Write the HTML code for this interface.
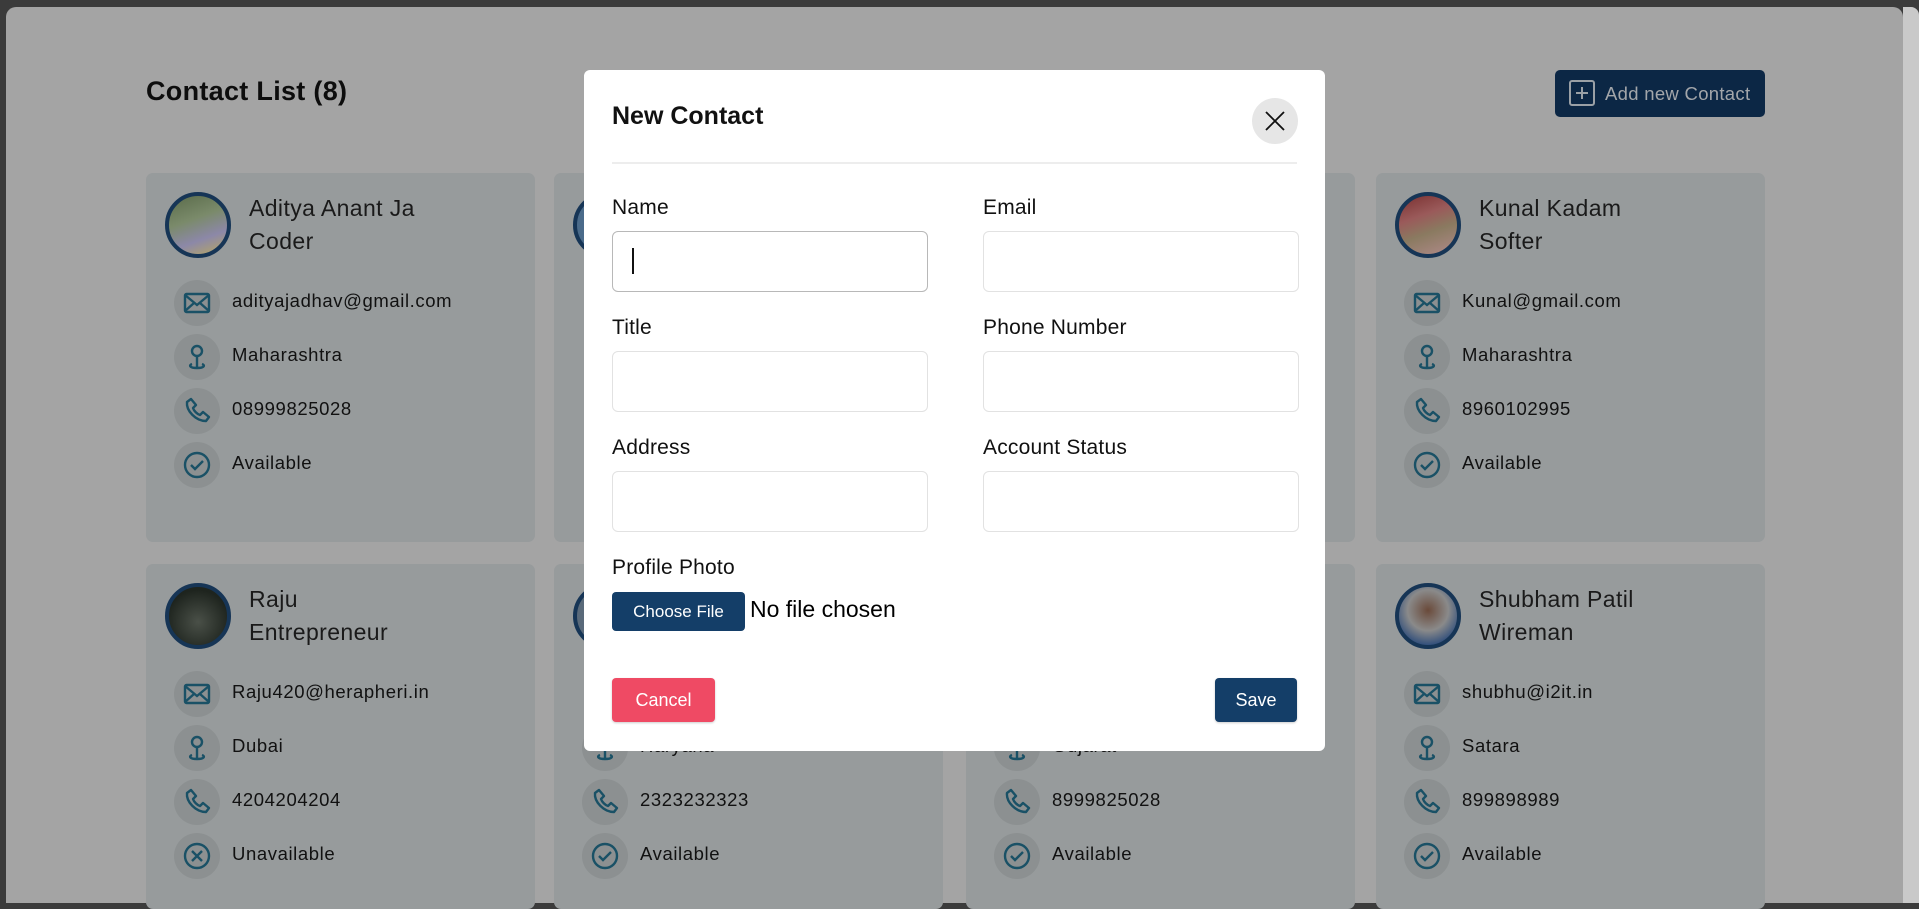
<!DOCTYPE html>
<html><head><meta charset="utf-8">
<style>
*{box-sizing:border-box;margin:0;padding:0}
body{width:1919px;height:903px;overflow:hidden;background:#3b3b3b;font-family:"Liberation Sans",sans-serif;position:relative}
.page{position:absolute;left:6px;top:7px;width:1897px;height:896px;background:#a4a4a4;border-radius:10px 10px 0 0}
.sb{position:absolute;left:1903px;top:7px;width:16px;height:896px;background:#c9c9c9;border-radius:0 8px 0 0}
.abs{position:absolute}
.title{left:146px;top:76px;font-size:27px;font-weight:bold;color:#0d0d0d;letter-spacing:.3px}
.addbtn{left:1555px;top:70px;width:210px;height:47px;background:#0c2745;border-radius:5px;color:#a3a6aa;font-size:18.5px;line-height:47px;padding-left:50px;letter-spacing:.3px}
.addbtn .pb{position:absolute;left:14px;top:10px;width:26px;height:26px;border:2px solid #9aa0a6;border-radius:3px}
.addbtn .pb:before{content:"";position:absolute;left:5px;top:10px;width:12px;height:2px;background:#9aa0a6}
.addbtn .pb:after{content:"";position:absolute;left:10px;top:5px;width:2px;height:12px;background:#9aa0a6}
.card{position:absolute;width:389px;background:#979b9c;border-radius:7px}
.av{position:absolute;left:19px;top:19px;width:66px;height:66px;border-radius:50%;border:4px solid #163556;overflow:hidden}
.nm{position:absolute;left:103px;font-size:23px;color:#1a1a1a;letter-spacing:.4px}
.ic{position:absolute;left:28px;width:46px;height:46px;border-radius:50%;background:#8c9091}
.ic svg{position:absolute;left:9px;top:9px}
.ic svg *{stroke:#1a5166}
.tx{position:absolute;left:86px;font-size:18.5px;color:#111;letter-spacing:.6px}
.modal{position:absolute;left:584px;top:70px;width:741px;height:681px;background:#fff;border-radius:6px}
.lbl{position:absolute;font-size:21px;color:#111;letter-spacing:.2px}
.inp{position:absolute;width:316px;height:61px;border:1px solid #e2e2e2;border-radius:6px}
</style></head><body>
<div class="page"></div>
<div class="sb"></div>
<div class="abs title">Contact List (8)</div>
<div class="abs addbtn"><div class="pb"></div>Add new Contact</div>

<div class="card" style="left:146px;top:173px;height:369px">
 <div class="av" style="background:linear-gradient(160deg,#5a6b4a 0%,#7a8a6a 40%,#8c88a8 70%,#b8a860 100%)"></div>
 <div class="nm" style="top:22px">Aditya Anant Ja</div>
 <div class="nm" style="top:55px">Coder</div>
 <div class="ic" style="top:107px"><svg width="28" height="28" viewBox="0 0 28 28" fill="none" stroke-width="2.4"><rect x="2" y="5" width="24" height="18" rx="1.5"/><path d="M2 6l12 10 12-10M2 22l9-8M26 22l-9-8"/></svg></div>
 <div class="tx" style="top:117px">adityajadhav@gmail.com</div>
 <div class="ic" style="top:161px"><svg width="28" height="28" viewBox="0 0 28 28" fill="none" stroke-width="2.4"><circle cx="14" cy="8" r="5"/><path d="M14 13v11M9 21c-3 1-3 4 5 4s8-3 5-4"/></svg></div>
 <div class="tx" style="top:171px">Maharashtra</div>
 <div class="ic" style="top:215px"><svg width="28" height="28" viewBox="0 0 28 28" fill="none" stroke-width="2.4" stroke-linejoin="round"><path d="M4 5l4-3 5 6-3 3c1 3 4 6 7 7l3-3 6 5-3 4C13 24 3 14 4 5z"/></svg></div>
 <div class="tx" style="top:225px">08999825028</div>
 <div class="ic" style="top:269px"><svg width="28" height="28" viewBox="0 0 28 28" fill="none" stroke-width="2.4"><circle cx="14" cy="14" r="12"/><path d="M8 14l4 4 8-8"/></svg></div>
 <div class="tx" style="top:279px">Available</div>
</div>
<div class="card" style="left:554px;top:173px;height:369px">
 <div class="av" style="background:#4b6b8a"></div>
</div>
<div class="card" style="left:966px;top:173px;height:369px"></div>
<div class="card" style="left:1376px;top:173px;height:369px">
 <div class="av" style="background:linear-gradient(160deg,#7a3030 0%,#9a5a5a 35%,#8a7a60 60%,#b08a8a 100%)"></div>
 <div class="nm" style="top:22px">Kunal Kadam</div>
 <div class="nm" style="top:55px">Softer</div>
 <div class="ic" style="top:107px"><svg width="28" height="28" viewBox="0 0 28 28" fill="none" stroke-width="2.4"><rect x="2" y="5" width="24" height="18" rx="1.5"/><path d="M2 6l12 10 12-10M2 22l9-8M26 22l-9-8"/></svg></div>
 <div class="tx" style="top:117px">Kunal@gmail.com</div>
 <div class="ic" style="top:161px"><svg width="28" height="28" viewBox="0 0 28 28" fill="none" stroke-width="2.4"><circle cx="14" cy="8" r="5"/><path d="M14 13v11M9 21c-3 1-3 4 5 4s8-3 5-4"/></svg></div>
 <div class="tx" style="top:171px">Maharashtra</div>
 <div class="ic" style="top:215px"><svg width="28" height="28" viewBox="0 0 28 28" fill="none" stroke-width="2.4" stroke-linejoin="round"><path d="M4 5l4-3 5 6-3 3c1 3 4 6 7 7l3-3 6 5-3 4C13 24 3 14 4 5z"/></svg></div>
 <div class="tx" style="top:225px">8960102995</div>
 <div class="ic" style="top:269px"><svg width="28" height="28" viewBox="0 0 28 28" fill="none" stroke-width="2.4"><circle cx="14" cy="14" r="12"/><path d="M8 14l4 4 8-8"/></svg></div>
 <div class="tx" style="top:279px">Available</div>
</div>

<div class="card" style="left:146px;top:564px;height:345px">
 <div class="av" style="background:radial-gradient(circle at 50% 60%,#4a5048 0%,#1e241e 70%)"></div>
 <div class="nm" style="top:22px">Raju</div>
 <div class="nm" style="top:55px">Entrepreneur</div>
 <div class="ic" style="top:107px"><svg width="28" height="28" viewBox="0 0 28 28" fill="none" stroke-width="2.4"><rect x="2" y="5" width="24" height="18" rx="1.5"/><path d="M2 6l12 10 12-10M2 22l9-8M26 22l-9-8"/></svg></div>
 <div class="tx" style="top:117px">Raju420@herapheri.in</div>
 <div class="ic" style="top:161px"><svg width="28" height="28" viewBox="0 0 28 28" fill="none" stroke-width="2.4"><circle cx="14" cy="8" r="5"/><path d="M14 13v11M9 21c-3 1-3 4 5 4s8-3 5-4"/></svg></div>
 <div class="tx" style="top:171px">Dubai</div>
 <div class="ic" style="top:215px"><svg width="28" height="28" viewBox="0 0 28 28" fill="none" stroke-width="2.4" stroke-linejoin="round"><path d="M4 5l4-3 5 6-3 3c1 3 4 6 7 7l3-3 6 5-3 4C13 24 3 14 4 5z"/></svg></div>
 <div class="tx" style="top:225px">4204204204</div>
 <div class="ic" style="top:269px"><svg width="28" height="28" viewBox="0 0 28 28" fill="none" stroke-width="2.4"><circle cx="14" cy="14" r="12"/><path d="M9 9l10 10M19 9L9 19"/></svg></div>
 <div class="tx" style="top:279px">Unavailable</div>
</div>
<div class="card" style="left:554px;top:564px;height:345px">
 <div class="av" style="background:#5a6a7a"></div>
 <div class="ic" style="top:161px"><svg width="28" height="28" viewBox="0 0 28 28" fill="none" stroke-width="2.4"><circle cx="14" cy="8" r="5"/><path d="M14 13v11M9 21c-3 1-3 4 5 4s8-3 5-4"/></svg></div>
 <div class="tx" style="top:171px">Haryana</div>
 <div class="ic" style="top:215px"><svg width="28" height="28" viewBox="0 0 28 28" fill="none" stroke-width="2.4" stroke-linejoin="round"><path d="M4 5l4-3 5 6-3 3c1 3 4 6 7 7l3-3 6 5-3 4C13 24 3 14 4 5z"/></svg></div>
 <div class="tx" style="top:225px">2323232323</div>
 <div class="ic" style="top:269px"><svg width="28" height="28" viewBox="0 0 28 28" fill="none" stroke-width="2.4"><circle cx="14" cy="14" r="12"/><path d="M8 14l4 4 8-8"/></svg></div>
 <div class="tx" style="top:279px">Available</div>
</div>
<div class="card" style="left:966px;top:564px;height:345px">
 <div class="ic" style="top:161px"><svg width="28" height="28" viewBox="0 0 28 28" fill="none" stroke-width="2.4"><circle cx="14" cy="8" r="5"/><path d="M14 13v11M9 21c-3 1-3 4 5 4s8-3 5-4"/></svg></div>
 <div class="tx" style="top:171px">Gujarat</div>
 <div class="ic" style="top:215px"><svg width="28" height="28" viewBox="0 0 28 28" fill="none" stroke-width="2.4" stroke-linejoin="round"><path d="M4 5l4-3 5 6-3 3c1 3 4 6 7 7l3-3 6 5-3 4C13 24 3 14 4 5z"/></svg></div>
 <div class="tx" style="top:225px">8999825028</div>
 <div class="ic" style="top:269px"><svg width="28" height="28" viewBox="0 0 28 28" fill="none" stroke-width="2.4"><circle cx="14" cy="14" r="12"/><path d="M8 14l4 4 8-8"/></svg></div>
 <div class="tx" style="top:279px">Available</div>
</div>
<div class="card" style="left:1376px;top:564px;height:345px">
 <div class="av" style="background:radial-gradient(circle at 50% 40%,#6a4a3a 0%,#8a8a8a 45%,#2a4a7a 80%)"></div>
 <div class="nm" style="top:22px">Shubham Patil</div>
 <div class="nm" style="top:55px">Wireman</div>
 <div class="ic" style="top:107px"><svg width="28" height="28" viewBox="0 0 28 28" fill="none" stroke-width="2.4"><rect x="2" y="5" width="24" height="18" rx="1.5"/><path d="M2 6l12 10 12-10M2 22l9-8M26 22l-9-8"/></svg></div>
 <div class="tx" style="top:117px">shubhu@i2it.in</div>
 <div class="ic" style="top:161px"><svg width="28" height="28" viewBox="0 0 28 28" fill="none" stroke-width="2.4"><circle cx="14" cy="8" r="5"/><path d="M14 13v11M9 21c-3 1-3 4 5 4s8-3 5-4"/></svg></div>
 <div class="tx" style="top:171px">Satara</div>
 <div class="ic" style="top:215px"><svg width="28" height="28" viewBox="0 0 28 28" fill="none" stroke-width="2.4" stroke-linejoin="round"><path d="M4 5l4-3 5 6-3 3c1 3 4 6 7 7l3-3 6 5-3 4C13 24 3 14 4 5z"/></svg></div>
 <div class="tx" style="top:225px">899898989</div>
 <div class="ic" style="top:269px"><svg width="28" height="28" viewBox="0 0 28 28" fill="none" stroke-width="2.4"><circle cx="14" cy="14" r="12"/><path d="M8 14l4 4 8-8"/></svg></div>
 <div class="tx" style="top:279px">Available</div>
</div>

<div class="modal">
 <div class="abs" style="left:28px;top:32px;font-size:25px;font-weight:bold;color:#111">New Contact</div>
 <div class="abs" style="left:668px;top:28px;width:46px;height:46px;border-radius:50%;background:#e6e6e6">
  <svg class="abs" style="left:13px;top:13px" width="20" height="20" viewBox="0 0 20 20" stroke="#111" stroke-width="1.8"><path d="M1 1l18 18M19 1L1 19"/></svg>
 </div>
 <div class="abs" style="left:28px;top:92px;width:685px;height:2px;background:#ededed"></div>

 <div class="lbl" style="left:28px;top:126px">Name</div>
 <div class="lbl" style="left:399px;top:126px">Email</div>
 <div class="inp" style="left:28px;top:161px;border:1.5px solid #b8b8b8"><div class="abs" style="left:19px;top:16px;width:2px;height:26px;background:#111"></div></div>
 <div class="inp" style="left:399px;top:161px"></div>

 <div class="lbl" style="left:28px;top:246px">Title</div>
 <div class="lbl" style="left:399px;top:246px">Phone Number</div>
 <div class="inp" style="left:28px;top:281px"></div>
 <div class="inp" style="left:399px;top:281px"></div>

 <div class="lbl" style="left:28px;top:366px">Address</div>
 <div class="lbl" style="left:399px;top:366px">Account Status</div>
 <div class="inp" style="left:28px;top:401px"></div>
 <div class="inp" style="left:399px;top:401px"></div>

 <div class="lbl" style="left:28px;top:486px">Profile Photo</div>
 <div class="abs" style="left:28px;top:522px;width:133px;height:39px;background:#143e68;border-radius:4px;color:#fff;font-size:17px;line-height:39px;text-align:center">Choose File</div>
 <div class="abs" style="left:166px;top:526px;font-size:23px;color:#000">No file chosen</div>

 <div class="abs" style="left:28px;top:608px;width:103px;height:44px;background:#ef4a64;border-radius:4px;color:#fff;font-size:18px;line-height:44px;text-align:center;box-shadow:0 1px 2px rgba(0,0,0,.2)">Cancel</div>
 <div class="abs" style="left:631px;top:608px;width:82px;height:44px;background:#143e68;border-radius:4px;color:#fff;font-size:18px;line-height:44px;text-align:center;box-shadow:0 1px 2px rgba(0,0,0,.2)">Save</div>
</div>
</body></html>
